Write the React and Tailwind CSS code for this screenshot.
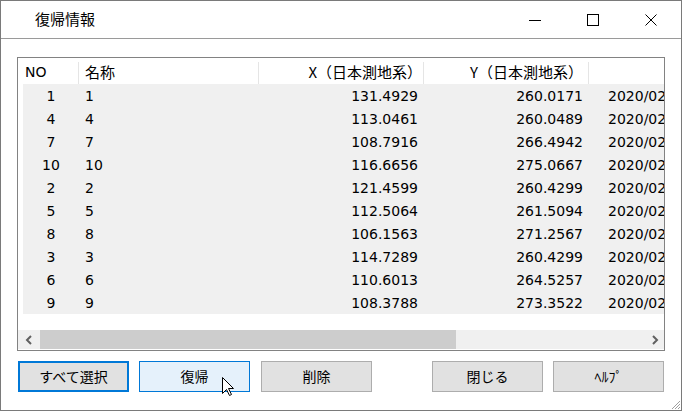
import React from 'react';

const rows = [
  [1, '131.4929', '260.0171'],
  [4, '113.0461', '260.0489'],
  [7, '108.7916', '266.4942'],
  [10, '116.6656', '275.0667'],
  [2, '121.4599', '260.4299'],
  [5, '112.5064', '261.5094'],
  [8, '106.1563', '271.2567'],
  [3, '114.7289', '260.4299'],
  [6, '110.6013', '264.5257'],
  [9, '108.3788', '273.3522'],
];

const listFont = { fontFamily: '"DejaVu Sans", "Noto Sans CJK JP", sans-serif' };
const uiFont = { fontFamily: '"Noto Sans CJK JP", "Noto Sans", sans-serif' };

function Btn({ children, kind }) {
  const look =
    kind === 'default'
      ? 'border-2 border-[#0078d7] bg-[#e1e1e1]'
      : kind === 'hover'
      ? 'border border-[#0078d7] bg-[#e5f1fb]'
      : 'border border-[#adadad] bg-[#e1e1e1]';
  return (
    <button className={`box-border flex h-[31px] w-[111px] items-center justify-center text-[14px] text-black ${look}`}>
      {children}
    </button>
  );
}

export default function App() {
  return (
    <div className="relative box-border flex h-[411px] w-[682px] flex-col border border-[#7a7a7a] bg-white" style={uiFont}>
      {/* title bar */}
      <div className="box-border flex h-[38px] shrink-0 items-center border-b border-[#9a9a9a]">
        <div className="pl-[34px] text-[15px] text-black">復帰情報</div>
        <div className="ml-auto mr-[1px] flex h-full">
          <div className="flex w-[58px] items-center justify-center">
            <svg width="12" height="12" viewBox="0 0 12 12">
              <line x1="0" y1="6.5" x2="12" y2="6.5" stroke="#000" strokeWidth="1" />
            </svg>
          </div>
          <div className="flex w-[58px] items-center justify-center">
            <svg width="12" height="12" viewBox="0 0 12 12">
              <rect x="0.5" y="0.5" width="11" height="11" fill="none" stroke="#000" strokeWidth="1" />
            </svg>
          </div>
          <div className="flex w-[58px] items-center justify-center">
            <svg width="12" height="12" viewBox="0 0 12 12">
              <path d="M0.5 0.5 L11.5 11.5 M11.5 0.5 L0.5 11.5" stroke="#000" strokeWidth="1" fill="none" />
            </svg>
          </div>
        </div>
      </div>

      {/* list view */}
      <div className="mx-[16px] mt-[18px] box-border flex h-[294px] flex-col border border-[#828282] bg-white text-[14px] text-black" style={listFont}>
        <div className="flex h-[26px] shrink-0 items-center bg-white pt-[4px]">
          <div className="box-border h-full w-[61px] border-r border-[#e5e5e5] pl-[7px]">NO</div>
          <div className="box-border h-full w-[180px] border-r border-[#e5e5e5] pl-[6px] text-[15px] leading-[19px]" style={uiFont}>名称</div>
          <div className="box-border h-full w-[165px] border-r border-[#e5e5e5] whitespace-nowrap pr-[1px] text-right text-[15px] leading-[19px]" style={uiFont}>X（日本測地系）</div>
          <div className="box-border h-full w-[165px] border-r border-[#e5e5e5] whitespace-nowrap pr-[5px] text-right text-[15px] leading-[19px]" style={uiFont}>Y（日本測地系）</div>
          <div className="flex-1" />
        </div>
        <div className="ml-[5px] flex flex-col bg-[#f0f0f0]">
          {rows.map(([no, x, y]) => (
            <div key={no} className="flex h-[23px] items-center whitespace-nowrap pt-[2px]">
              <div className="w-[56px] text-center">{no}</div>
              <div className="w-[180px] pl-[6px]">{no}</div>
              <div className="w-[165px] pr-[6px] text-right">{x}</div>
              <div className="w-[165px] pr-[6px] text-right">{y}</div>
              <div className="min-w-0 flex-1 overflow-hidden pl-[19px]">2020/02/14 10:25:31</div>
            </div>
          ))}
        </div>
        <div className="flex-1" />
        {/* horizontal scrollbar */}
        <div className="mb-[1px] flex h-[19px] shrink-0 bg-[#f0f0f0]">
          <div className="flex w-[22px] items-center justify-center">
            <svg width="8" height="10" viewBox="0 0 8 10">
              <path d="M6 1 L2 5 L6 9" stroke="#606060" strokeWidth="2" fill="none" />
            </svg>
          </div>
          <div className="w-[416px] bg-[#cdcdcd]" />
          <div className="flex-1" />
          <div className="flex w-[18px] items-center justify-center">
            <svg width="8" height="10" viewBox="0 0 8 10">
              <path d="M2 1 L6 5 L2 9" stroke="#606060" strokeWidth="2" fill="none" />
            </svg>
          </div>
        </div>
      </div>

      {/* buttons */}
      <div className="mt-[10px] flex pl-[17px] pr-[17px]">
        <div className="flex gap-[10px]">
          <Btn kind="default">すべて選択</Btn>
          <Btn kind="hover">復帰</Btn>
          <div className="ml-[1px]">
            <Btn>削除</Btn>
          </div>
        </div>
        <div className="ml-auto flex gap-[10px]">
          <Btn>閉じる</Btn>
          <Btn>ﾍﾙﾌﾟ</Btn>
        </div>
      </div>

      {/* mouse cursor */}
      <svg className="absolute left-[221px] top-[376px]" width="13" height="20" viewBox="0 0 13 20">
        <path d="M0.5 0.5 L0.5 16.5 L4.5 12.5 L7.5 18.5 L9.5 17.5 L6.5 11.5 L11.5 11.5 Z" fill="#fff" stroke="#000" strokeWidth="1" strokeLinejoin="miter" />
      </svg>

      {/* resize grip */}
      <svg className="absolute bottom-0 right-0" width="12" height="12" viewBox="0 0 12 12">
        <path d="M11 3 L3 11 M11 6 L6 11 M11 9 L9 11" stroke="#a0a0a0" strokeWidth="1" />
      </svg>
    </div>
  );
}
